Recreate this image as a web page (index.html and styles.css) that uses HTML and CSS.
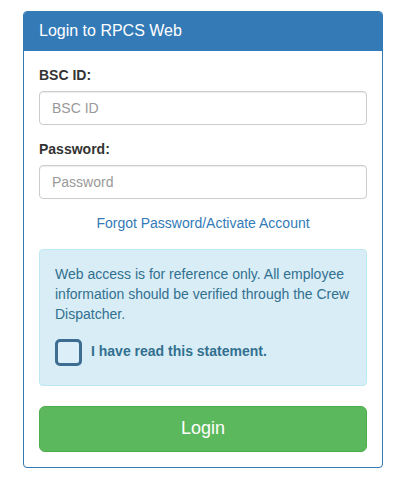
FILE: index.html
```html
<!DOCTYPE html>
<html>
<head>
<meta charset="utf-8">
<link rel="stylesheet" href="styles.css">
</head>
<body>
<div class="page">
  <div class="panel">
    <div class="panel-heading">
      <h3 class="panel-title">Login to RPCS Web</h3>
    </div>
    <form class="panel-body">
      <div class="form-group">
        <label class="field-label" for="bsc">BSC ID:</label>
        <input class="form-control" id="bsc" type="text" placeholder="BSC ID">
      </div>
      <div class="form-group">
        <label class="field-label" for="pw">Password:</label>
        <input class="form-control" id="pw" type="password" placeholder="Password">
      </div>
      <div class="forgot"><a href="#">Forgot Password/Activate Account</a></div>
      <div class="alert">
        <p class="alert-text">Web access is for reference only. All employee information should be verified through the Crew Dispatcher.</p>
        <label class="check-row">
          <input class="check" type="checkbox">
          <span class="check-label">I have read this statement.</span>
        </label>
      </div>
      <button class="btn-login" type="button">Login</button>
    </form>
  </div>
</div>
</body>
</html>
```

FILE: styles.css
```css
* { box-sizing: border-box; }
html, body {
  margin: 0;
  padding: 0;
  background: #fff;
}
body {
  font-family: "Liberation Sans", Arial, Helvetica, sans-serif;
  font-size: 14px;
  line-height: 1.42857;
  color: #333;
}
.page {
  padding: 11px 0 0 23px;
}
.panel {
  width: 360px;
  border: 1px solid #337ab7;
  border-radius: 4px;
  background: #fff;
  box-shadow: 0 1px 1px rgba(0,0,0,.05);
}
.panel-heading {
  background: #337ab7;
  color: #fff;
  padding: 10px 15px;
  border-bottom: 1px solid #337ab7;
  border-radius: 3px 3px 0 0;
}
.panel-title {
  margin: 0;
  font-size: 16px;
  font-weight: normal;
  line-height: 1.1;
}
.panel-body {
  padding: 15px;
  margin: 0;
}
.form-group {
  margin-bottom: 15px;
}
.field-label {
  display: block;
  font-weight: bold;
  margin-bottom: 5px;
  color: #333;
}
.form-control {
  display: block;
  width: 100%;
  height: 34px;
  padding: 6px 12px;
  font-family: inherit;
  font-size: 14px;
  line-height: 1.42857;
  color: #555;
  background: #fff;
  border: 1px solid #ccc;
  border-radius: 4px;
  box-shadow: inset 0 1px 1px rgba(0,0,0,.075);
}
.form-control::placeholder {
  color: #999;
}
.forgot {
  text-align: center;
  margin-bottom: 15px;
}
.forgot a {
  color: #337ab7;
  text-decoration: none;
}
.alert {
  background: #d9edf7;
  border: 1px solid #bce8f1;
  border-radius: 4px;
  color: #31708f;
  padding: 15px 15px 15px 15px;
  margin-bottom: 20px;
}
.alert-text {
  margin: 0 0 10px;
}
.check-row {
  display: flex;
  align-items: center;
  height: 35px;
  gap: 9px;
  font-weight: bold;
}
.check {
  appearance: none;
  -webkit-appearance: none;
  margin: 0;
  width: 27px;
  height: 27px;
  border: 3px solid #3d6d90;
  border-radius: 5px;
  background: #dceef8;
}
.check-label {
  color: #31708f;
}
.btn-login {
  display: block;
  width: 100%;
  height: 46px;
  padding: 10px 16px;
  font-family: inherit;
  font-size: 18px;
  line-height: 1.3333;
  color: #fff;
  background: #5cb85c;
  border: 1px solid #4cae4c;
  border-radius: 6px;
}
```
